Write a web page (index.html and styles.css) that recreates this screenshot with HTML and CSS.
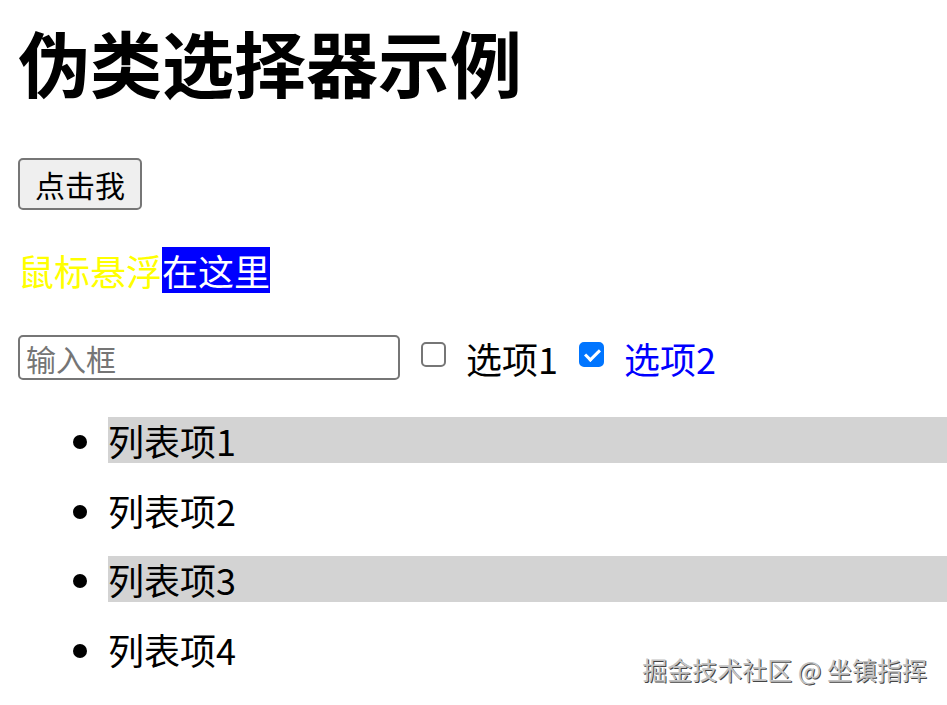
FILE: index.html
```html
<!DOCTYPE html>
<html lang="zh-CN">
<head>
    <meta charset="UTF-8">
    <meta name="viewport" content="width=device-width, initial-scale=1.0">
    <title>伪类选择器示例</title>
    <link rel="stylesheet" href="styles.css">
</head>
<body>
    <h1>伪类选择器示例</h1>

    <button class="btn">点击我</button>

    <p class="hover-text">鼠标悬浮<span class="selected">在这里</span></p>

    <div class="form-row">
        <input type="text" class="text-input" placeholder="输入框">
        <input type="checkbox" id="opt1" class="check">
        <label for="opt1" class="option">选项1</label>
        <input type="checkbox" id="opt2" class="check" checked>
        <label for="opt2" class="option">选项2</label>
    </div>

    <ul class="list">
        <li>列表项1</li>
        <li>列表项2</li>
        <li>列表项3</li>
        <li>列表项4</li>
    </ul>

    <div class="watermark">掘金技术社区 @ 坐镇指挥</div>
</body>
</html>
```

FILE: styles.css
```css
body {
    font-family: "Noto Sans CJK SC", "Noto Sans", sans-serif;
    font-size: 36px;
    margin: 0 0 0 18px;
    color: #000;
    background: #fff;
}
h1 {
    font-size: 72px;
    font-weight: bold;
    line-height: 95px;
    margin: 13px 0 50px;
}
.btn {
    display: block;
    font-family: inherit;
    font-size: 30px;
    height: 52px;
    line-height: 46px;
    padding: 0 15px;
    background-color: #efefef;
    border: 2px solid #767676;
    border-radius: 5px;
    color: #000;
}
.hover-text {
    color: yellow;
    line-height: 46px;
    margin: 37px 0 0;
}
.selected {
    display: inline-block;
    background-color: blue;
    color: #fff;
}
.form-row {
    display: flex;
    align-items: center;
    height: 45px;
    margin-top: 42px;
}
.text-input {
    box-sizing: border-box;
    width: 382px;
    height: 45px;
    font-family: inherit;
    font-size: 30px;
    padding: 0 6px;
    border: 2px solid #767676;
    border-radius: 5px;
    margin: 0;
}
.text-input::placeholder {
    color: #757575;
}
.check {
    appearance: none;
    -webkit-appearance: none;
    position: relative;
    box-sizing: border-box;
    width: 25px;
    height: 25px;
    margin: 0 0 6px 21px;
    border: 2px solid #767676;
    border-radius: 5px;
    background: #fff;
}
.check:checked {
    background: #0075ff;
    border-color: #0075ff;
}
.check:checked::after {
    content: "";
    position: absolute;
    left: 7px;
    top: 2px;
    width: 6px;
    height: 12px;
    border: solid #fff;
    border-width: 0 3px 3px 0;
    transform: rotate(45deg);
}
.option {
    margin-left: 20px;
    line-height: 46px;
}
#opt2 {
    margin-left: 21px;
}
#opt2 + .option {
    color: blue;
}
.list {
    margin: 37px 0 0;
    padding-left: 90px;
}
.list li {
    line-height: 46px;
    margin-bottom: 23.67px;
}
.list li:nth-child(odd) {
    background-color: lightgray;
}
.watermark {
    position: absolute;
    right: 20px;
    bottom: 19px;
    font-size: 25px;
    line-height: 34px;
    color: #c4c4c4;
    text-shadow: 1px 1px 0 #444;
}
```
